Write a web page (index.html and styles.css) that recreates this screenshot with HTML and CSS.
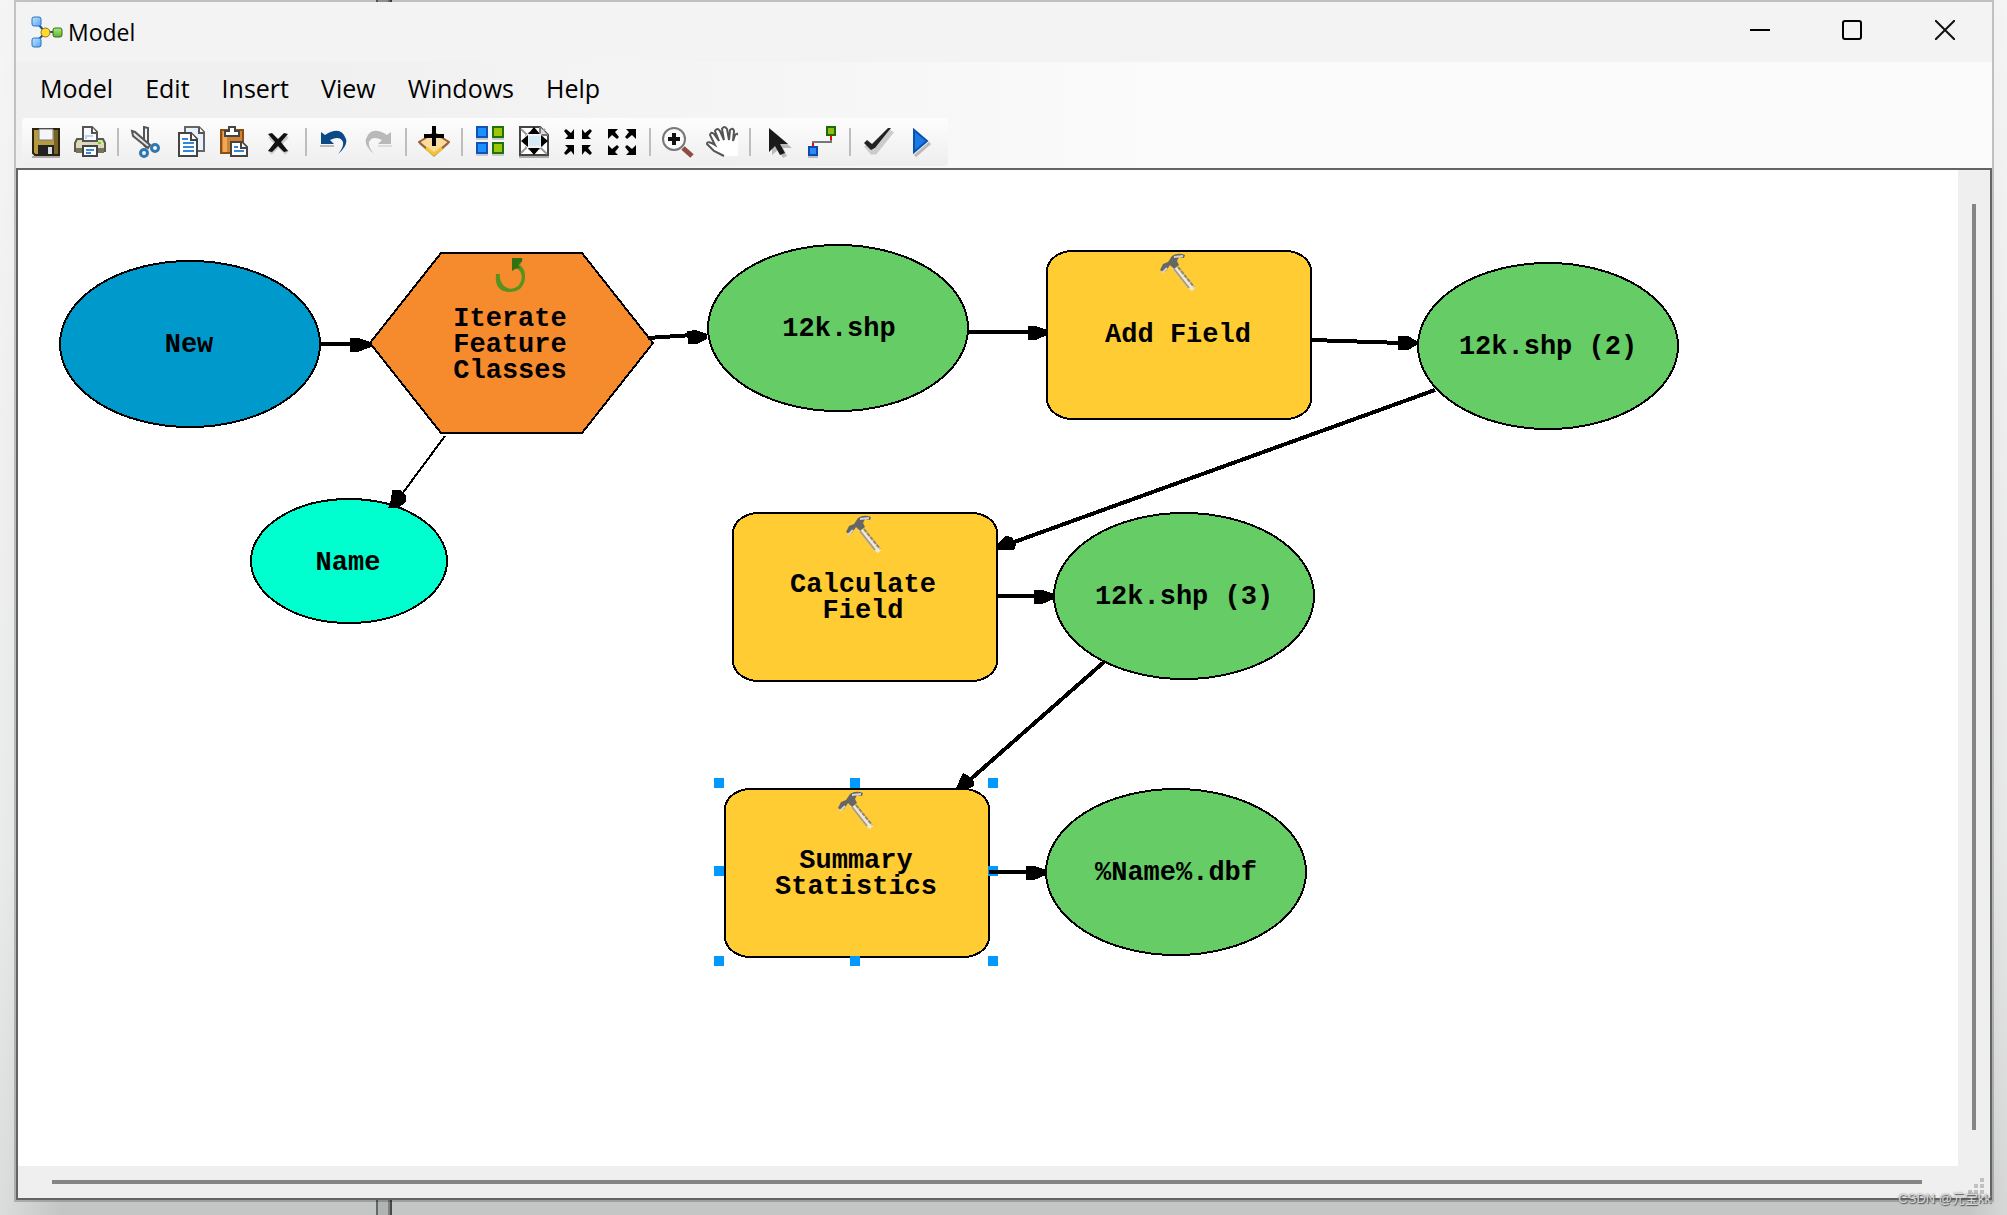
FILE: index.html
```html
<!DOCTYPE html>
<html lang="en">
<head>
<meta charset="utf-8">
<title>Model</title>
<link rel="stylesheet" href="styles.css">
</head>
<body>
<main class="window">
  <header class="titlebar">
    <svg class="app-icon" width="32" height="32" viewBox="0 0 32 32" aria-hidden="true">
      <defs>
        <linearGradient id="blue" x2="1" y2="1"><stop stop-color="#c4e4ff"/><stop offset="1" stop-color="#4fa6fb"/></linearGradient>
        <linearGradient id="green" x2="0" y2="1"><stop stop-color="#b5e67e"/><stop offset="1" stop-color="#5fb22b"/></linearGradient>
      </defs>
      <path d="M8 9l5 6M8 23l5-5M18 16h5" stroke="#0c5a94" stroke-width="2"/>
      <rect x="1" y="1" width="9" height="9" rx="2" fill="url(#blue)" stroke="#2f73b4"/>
      <rect x="1" y="22" width="9" height="9" rx="2" fill="url(#blue)" stroke="#2f73b4"/>
      <circle cx="14.500" cy="16.500" r="4.500" fill="#ffdb2c" stroke="#a66a16"/>
      <rect x="22" y="12" width="9" height="9" rx="2" fill="url(#green)" stroke="#2f6f1e"/>
    </svg>
    <h1 class="title">Model</h1>
    <div class="controls">
      <button class="control" aria-label="Minimize"><svg width="20" height="20"><path d="M0 10h20" stroke="#000" stroke-width="2"/></svg></button>
      <button class="control" aria-label="Maximize"><svg width="20" height="20"><rect x="1" y="1" width="18" height="18" rx="2" fill="none" stroke="#000" stroke-width="2"/></svg></button>
      <button class="control" aria-label="Close"><svg width="20" height="20"><path d="M0 0l20 20M20 0L0 20" stroke="#111" stroke-width="2"/></svg></button>
    </div>
  </header>

  <div class="bars">
    <nav class="menubar">
      <button class="menu">Model</button>
      <button class="menu">Edit</button>
      <button class="menu">Insert</button>
      <button class="menu">View</button>
      <button class="menu">Windows</button>
      <button class="menu">Help</button>
    </nav>
    <div class="toolbar" role="toolbar" aria-label="Standard">
      <button class="tool" aria-label="Save"><svg viewBox="0 0 32 32">
        <path d="M3 3h26v26H5l-2-2z" fill="#b79a3f" stroke="#2b220c" stroke-width="2"/><path d="M24 4h4v24h-4z" fill="#78612a"/>
        <path d="M9 3h14v11H9z" fill="#f3f5f8" stroke="#7a7a80"/><path d="M8 19h16v10H8z" fill="#222"/><path d="M18 21h4v7h-4z" fill="#ddd"/><path d="M2 31h28" stroke="#aaa" stroke-width="2"/></svg></button>
      <button class="tool" aria-label="Print"><svg viewBox="0 0 32 32">
        <path d="M3 13h26l2 4v8H1v-8z" fill="#dcd9bd" stroke="#5c5a42" stroke-width="2"/><path d="M2 22h28v5H2z" fill="#77745a"/>
        <path d="M9 15V1h9l5 5v9z" fill="#f8fbff" stroke="#555" stroke-width="2"/><path d="M18 1v6h5" fill="#fff" stroke="#555" stroke-width="2"/><path d="M12 13v-3h7" stroke="#b9d3ee" stroke-width="2" fill="none"/>
        <path d="M9 20h14v10H9z" fill="#fff" stroke="#444" stroke-width="2"/><path d="M12 24h8M12 27h5" stroke="#3b8bd6" stroke-width="2"/><path d="M24 17h3" stroke="#62e000" stroke-width="2"/></svg></button>
      <span class="sep"></span>
      <button class="tool" aria-label="Cut"><svg viewBox="0 0 32 32">
        <path d="M14 1l4 1v14l-2 5-2-2z" fill="#f5f5f5" stroke="#555" stroke-width="2"/><path d="M2 5l3 1 15 13-2 3L3 10z" fill="#e5e5e5" stroke="#555" stroke-width="2"/>
        <circle cx="25" cy="22" r="3.500" fill="none" stroke="#2e78b0" stroke-width="3"/><circle cx="14" cy="27" r="3.500" fill="none" stroke="#2e78b0" stroke-width="3"/></svg></button>
      <button class="tool" aria-label="Copy"><svg viewBox="0 0 32 32">
        <path d="M11 23V1h14l5 5v19H11z" fill="#e8f3ff" stroke="#666" stroke-width="2"/><path d="M25 1v6h5" fill="#fff" stroke="#555" stroke-width="2"/>
        <path d="M5 7h12l6 6v17H5z" fill="#fff" stroke="#444" stroke-width="2"/><path d="M17 7v7h6" fill="#fff" stroke="#444" stroke-width="2"/><path d="M8 13h6M9 17h11M9 21h11M9 25h11" stroke="#3188d8" stroke-width="2"/></svg></button>
      <button class="tool" aria-label="Paste"><svg viewBox="0 0 32 32">
        <path d="M3 4h22v23H3z" fill="#cf8330" stroke="#8c4e12" stroke-width="2"/><path d="M7 5v21" stroke="#eda85a" stroke-width="4"/>
        <path d="M11 5V1h6v4h4v5H7V5z" fill="#fff" stroke="#444" stroke-width="2"/><path d="M13 16h11l5 5v9H13z" fill="#fff" stroke="#444" stroke-width="2"/><path d="M23 16v6h6" fill="#fff" stroke="#444" stroke-width="2"/><path d="M16 21h4M16 25h10" stroke="#3188d8" stroke-width="2"/></svg></button>
      <button class="tool" aria-label="Delete"><svg viewBox="0 0 32 32"><path d="M8 10l17 17M25 10L8 27" stroke="#ccc" stroke-width="5"/><path d="M6 8l4-1 6 6 6-6 4 1-7 8 7 9-4 1-6-6-6 6-4-1 7-9z" fill="#111"/></svg></button>
      <span class="sep"></span>
      <button class="tool" aria-label="Undo"><svg viewBox="0 0 32 32"><path d="M2 20h14" stroke="#bbb" stroke-width="2"/><path d="M3 6v12h13l-4-4q10-5 13 2 1 5-5 12 10-8 8-15Q23-1 7 9z" fill="#0b4a87"/></svg></button>
      <button class="tool" aria-label="Redo" disabled><svg viewBox="0 0 32 32"><path d="M16 20h14" stroke="#ddd" stroke-width="2"/><path d="M29 6v12H16l4-4q-10-5-13 2-1 5 5 12-10-8-8-15Q9-1 25 9z" fill="#b9b9b9"/></svg></button>
      <span class="sep"></span>
      <button class="tool" aria-label="Add data or tool"><svg viewBox="0 0 32 32"><path d="M16 9L1 18l15 13 15-13z" fill="#aaa"/><path d="M16 7L1 16l15 13 15-13z" fill="#fbdca0" stroke="#9a6230" stroke-width="2"/><path d="M8 22l8 6 8-6" stroke="#f5c52b" stroke-width="3" fill="none"/><path d="M16 0v20M6 10h20" stroke="#000" stroke-width="4"/></svg></button>
      <span class="sep"></span>
      <button class="tool" aria-label="Auto layout"><svg viewBox="0 0 32 32"><path d="M3 1h10v10H3zM3 17h10v10H3z" fill="#1b91ff" stroke="#1253b5" stroke-width="2"/><path d="M19 1h10v10H19zM19 17h10v10H19z" fill="#9bc60b" stroke="#1f7305" stroke-width="2"/><path d="M2 13h12M18 13h12M2 29h12M18 29h12" stroke="#ccc" stroke-width="2"/></svg></button>
      <button class="tool" aria-label="Full extent"><svg viewBox="0 0 32 32"><path d="M2 1h20l8 8v20H2z" fill="#fff" stroke="#444" stroke-width="2"/><path d="M1 31h30" stroke="#aaa" stroke-width="2"/><path d="M3 3l26 25M27 3L3 27" stroke="#999" stroke-width="2"/><path d="M22 1v8h8" fill="#ddd" stroke="#777" stroke-width="2"/><circle cx="16" cy="15" r="10" fill="#f2f2f2" stroke="#999" stroke-dasharray="2 2"/><path d="M11 10h11v10H11z" fill="#d5eaf8"/><path d="M16 1l6 7H10zM16 29l6-7H10zM3 15l7-6v12zM30 15l-7-6v12z" fill="#000"/></svg></button>
      <button class="tool" aria-label="Zoom in fixed"><svg viewBox="0 0 32 32"><path d="M12 3v10H3l3-3-4-5 2-2 5 4zM20 3v10h9l-3-3 4-5-2-2-5 4zM12 29V19H3l3 3-4 5 2 2 5-4zM20 29V19h9l-3 3 4 5-2 2-5-4z" fill="#000"/></svg></button>
      <button class="tool" aria-label="Zoom out fixed"><svg viewBox="0 0 32 32"><path d="M2 13V3h10L9 6l4 5-2 2-5-4zM30 13V3H20l3 3-4 5 2 2 5-4zM2 19v10h10l-3-3 4-5-2-2-5 4zM30 19v10H20l3-3-4-5 2-2 5 4z" fill="#000"/></svg></button>
      <span class="sep"></span>
      <button class="tool" aria-label="Zoom in"><svg viewBox="0 0 32 32"><path d="M21 22l9 8" stroke="#8d4c3e" stroke-width="5"/><circle cx="12" cy="13" r="11" fill="#f8fafb" stroke="#777" stroke-width="2"/><path d="M12 7v12M6 13h12" stroke="#111" stroke-width="4"/></svg></button>
      <button class="tool" aria-label="Pan"><svg viewBox="0 0 32 32"><path d="M18 30L8 25 1 18q0-4 8 1L4 9q1-4 4-1l5 7-4-10q2-4 5 0l4 9-2-11q2-4 5 0l2 11 1-10q3-3 4 1l-1 10 2-6q3-3 4 1l-1 20z" fill="#fff"/><path d="M18 30L8 25 1 18q0-4 8 1L4 9q1-4 4-1l5 7-4-10q2-4 5 0l4 9-2-11q2-4 5 0l2 11 1-10q3-3 4 1l-1 10 2-6q3-3 4 1v14" fill="none" stroke="#555" stroke-width="2"/></svg></button>
      <span class="sep"></span>
      <button class="tool" aria-label="Select"><svg viewBox="0 0 32 32"><path d="M10 5v24l6-5 5 8 4-2-4-8h9z" fill="#bbb"/><path d="M7 2v24l6-6 5 9 5-2-5-9h8z" fill="#1a1a1a"/></svg></button>
      <button class="tool" aria-label="Connect"><svg viewBox="0 0 32 32"><path d="M7 20v-4h18v-5" fill="none" stroke="#777" stroke-width="2"/><path d="M7 17v4M25 9v5" stroke="#f00" stroke-width="2"/><rect x="3" y="21" width="8" height="8" fill="#2a8cf4" stroke="#0b4aae" stroke-width="2"/><rect x="21" y="1" width="8" height="8" fill="#8fbd12" stroke="#1d6a08" stroke-width="2"/><path d="M2 31h10" stroke="#bbb" stroke-width="2"/></svg></button>
      <span class="sep"></span>
      <button class="tool" aria-label="Validate"><svg viewBox="0 0 32 32"><path d="M4 19l6 7h3L30 5" fill="none" stroke="#ccc" stroke-width="5"/><path d="M2 17l3-3 5 4L26 2h3L13 22l-4 2z" fill="#222"/></svg></button>
      <button class="tool" aria-label="Run"><svg viewBox="0 0 32 32"><path d="M9 30l15-13" stroke="#bbb" stroke-width="3"/><path d="M8 4v22l13-11z" fill="#1b79e5" stroke="#0952b2" stroke-width="2"/></svg></button>
    </div>
  </div>

  <section class="workspace">
    <div class="canvas">
      <svg class="diagram" width="1940" height="996" viewBox="18 170 1940 996" role="img" aria-label="Model diagram">
        <defs>
          <g id="hammer">
            <path d="M14 10l21 24-3 3-4-3L12 14z" fill="#f1e8d8"/>
            <path d="M14 15l15 19" stroke="#a79c8a" stroke-width="2"/>
            <path d="M18 13l16 20" stroke="#8d857a" stroke-width="2" stroke-dasharray="4 1"/>
            <path d="M0 16l3-6 5-2 4-6q6-4 13-1l-1 3-5-1-2 4 2 4-5 4-4-4-4 6-3 1z" fill="#666"/>
            <path d="M2 19l5-5M14 3l9-1" stroke="#d4d4d4" stroke-width="2" fill="none"/>
          </g>
        </defs>
        <g class="shape">
          <ellipse cx="190" cy="344" rx="130" ry="83" fill="#0099cc"/>
          <path d="M370 343l71-90h141l71 90-71 90H441z" fill="#f68b2e"/>
          <ellipse cx="349" cy="561" rx="98" ry="62" fill="#00ffcf"/>
          <ellipse cx="838" cy="328" rx="130" ry="83" fill="#66cc66"/>
          <rect x="1047" y="251" width="264" height="168" rx="26" ry="20" fill="#ffcc33"/>
          <ellipse cx="1548" cy="346" rx="130" ry="83" fill="#66cc66"/>
          <rect x="733" y="513" width="264" height="168" rx="26" ry="20" fill="#ffcc33"/>
          <ellipse cx="1184" cy="596" rx="130" ry="83" fill="#66cc66"/>
          <rect x="725" y="789" width="264" height="168" rx="26" ry="20" fill="#ffcc33"/>
          <ellipse cx="1176" cy="872" rx="130" ry="83" fill="#66cc66"/>
        </g>
        <path class="handles" d="M714 778h10v10h-10zM850 778h10v10h-10zM988 778h10v10h-10zM714 866h10v10h-10zM988 866h10v10h-10zM714 956h10v10h-10zM850 956h10v10h-10zM988 956h10v10h-10z"/>
        <g class="links">
          <path d="M320 344h34M648 338l44-3M969 332h62M1312 340l90 3M1435 390L1006 545M997 596h40M1104 662L964 785M989 872h40"/>
          <path class="thin" d="M445 436l-43 58"/>
        </g>
        <g class="heads">
          <path d="M350 338h8l13 4v5l-13 5h-8z"/>
          <path d="M687 331l9-1 11 4v5l-10 5h-9z"/>
          <path d="M1028 326h8l11 4v5l-11 5h-8z"/>
          <path d="M1398 336h10l9 5v4l-9 5h-10z"/>
          <path d="M998 543l8-7 6 1 4 8-2 5h-16z"/>
          <path d="M1034 590h8l12 4v5l-12 5h-8z"/>
          <path d="M956 788l7-15 4 2 7 7v4l-6 3z"/>
          <path d="M1026 866h8l12 4v5l-12 5h-8z"/>
          <path d="M392 490h8l6 5v7l-8 6h-10l3-8z"/>
        </g>
        <use href="#hammer" x="1160" y="254"/>
        <use href="#hammer" x="846" y="516"/>
        <use href="#hammer" x="838" y="792"/>
        <path d="M496 274q-2 18 14 18 15-1 15-16 0-7-5-11l3-6h-10v10l3-2q10 8 3 18-7 7-15 1-5-5-4-12z" fill="#55921f"/>
        <path d="M512 258h10v3l-4 4 2 3-5 1-3 2z" fill="#357010"/>
        <g class="labels">
          <text x="189" y="352">New</text>
          <text x="510" y="326">Iterate</text>
          <text x="510" y="352">Feature</text>
          <text x="510" y="378">Classes</text>
          <text x="348" y="570">Name</text>
          <text x="839" y="336">12k.shp</text>
          <text x="1178" y="342">Add Field</text>
          <text x="1548" y="354">12k.shp (2)</text>
          <text x="863" y="592">Calculate</text>
          <text x="863" y="618">Field</text>
          <text x="1184" y="604">12k.shp (3)</text>
          <text x="856" y="868">Summary</text>
          <text x="856" y="894">Statistics</text>
          <text x="1176" y="880">%Name%.dbf</text>
        </g>
      </svg>
    </div>
    <div class="scroll scroll-y"><span class="thumb"></span></div>
    <div class="scroll scroll-x"><span class="thumb"></span></div>
    <svg class="grip" width="32" height="32" aria-hidden="true"><path d="M22 12h4v4h-4zM16 18h4v4h-4zM22 18h4v4h-4zM10 24h4v4h-4zM16 24h4v4h-4zM22 24h4v4h-4z" fill="#c0c0c0"/></svg>
  </section>
</main>
<span class="watermark">CSDN @元宝kk</span>
</body>
</html>
```
FILE: styles.css
```css
* { box-sizing: border-box; }

body {
  margin: 0;
  height: 100vh;
  padding: 0 13px 13px 14px;
  overflow: hidden;
  position: relative;
  font-family: "Open Sans", "Noto Sans", sans-serif;
  color: #000;
  background:
    linear-gradient(90deg, transparent 376px, #60686c 376px 378px, #b2b4b3 378px 388px, #808080 388px 390px, #484848 390px 392px, transparent 392px),
    linear-gradient(90deg, rgba(255, 255, 255, .4), transparent 60px calc(100% - 40px), rgba(255, 255, 255, .3)),
    linear-gradient(#eeefee, #dcdedd 70%, #c4c6c5);
}

button {
  font: inherit;
  color: inherit;
  border: 0;
  padding: 0;
  background: none;
}

.window {
  height: 100%;
  display: flex;
  flex-direction: column;
  border: 2px solid rgba(0, 0, 0, .2);
  background: #f0f0f0;
  background-clip: padding-box;
}

.titlebar {
  flex: 0 0 60px;
  display: flex;
  align-items: center;
  padding: 0 12px 0 15px;
  background: #f3f3f3;
}

.app-icon { margin-right: 5px; }

.title {
  flex: 1;
  margin: 0;
  font-size: 23px;
  line-height: 32px;
  font-weight: 400;
}

.controls { display: flex; align-self: flex-start; }

.control {
  width: 92px;
  height: 56px;
}

.control:last-child { width: 70px; margin-left: 12px; }

.control svg { display: block; margin: 0 auto; }

.bars { background: linear-gradient(90deg, #f0f0f0 300px, #fbfbfb 1200px); }

.menubar {
  height: 56px;
  display: flex;
  align-items: center;
  gap: 32px;
  padding: 0 0 4px 24px;
  font-size: 25px;
}

.menu { line-height: 32px; }

.toolbar {
  width: max-content;
  height: 48px;
  margin: 0 0 2px 6px;
  padding: 0 4px 0 2px;
  display: flex;
  align-items: center;
  border-radius: 4px;
  background: linear-gradient(#fdfdfd, #eeeeee);
}

.tool {
  width: 44px;
  height: 40px;
  display: grid;
  place-items: center;
}

.tool svg { width: 32px; height: 32px; }

.sep {
  width: 2px;
  height: 28px;
  margin: 0 5px;
  background: #bdbdbd;
}

.workspace {
  flex: 1;
  min-height: 0;
  display: grid;
  grid-template: minmax(0, 1fr) 32px / minmax(0, 1fr) 32px;
  border: 2px solid #646464;
  background: #efefef;
}

.canvas { overflow: hidden; background: #fff; }

.diagram { display: block; }

.shape { stroke: #000; stroke-width: 2; shape-rendering: crispEdges; }

.handles { fill: #0099ff; shape-rendering: crispEdges; }

.links { fill: none; stroke: #000; stroke-width: 4; shape-rendering: crispEdges; }

.links .thin { stroke-width: 2; }

.heads { fill: #000; shape-rendering: crispEdges; }

.labels {
  font: 700 27px "Liberation Mono", monospace;
  text-anchor: middle;
}

.scroll { display: flex; }

.scroll-y { justify-content: center; padding: 34px 0 36px; }

.scroll-x { align-items: center; padding: 0 36px 0 34px; }

.thumb { background: #858585; }

.scroll-y .thumb { width: 4px; }

.scroll-x .thumb { flex: 1; height: 4px; }

.watermark {
  position: absolute;
  right: 16px;
  bottom: 6px;
  font: 13px/20px "Liberation Sans", "Noto Sans CJK SC", sans-serif;
  color: #d8d8d8;
  text-shadow: 1px 1px 1px #555, 0 0 2px #777;
}
```
